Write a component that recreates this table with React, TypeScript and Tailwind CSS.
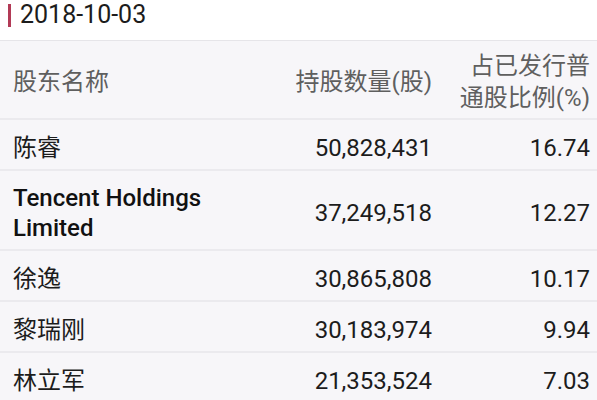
import * as React from "react";

const rows = [
  { name: "陈睿", shares: "50,828,431", pct: "16.74" },
  { name: "Tencent Holdings Limited", shares: "37,249,518", pct: "12.27", en: true },
  { name: "徐逸", shares: "30,865,808", pct: "10.17" },
  { name: "黎瑞刚", shares: "30,183,974", pct: "9.94" },
  { name: "林立军", shares: "21,353,524", pct: "7.03" },
];

const font = { fontFamily: 'Roboto, "Noto Sans CJK SC", sans-serif' };

const App = () => {
  return (
    <div className="w-[597px] h-[400px] overflow-hidden bg-[#f7f6f9] text-[24px]" style={font}>
      {/* date bar */}
      <div className="h-[41px] bg-white border-b border-[#e6e5e9] flex items-start pt-[4px]">
        <div className="ml-[8px] w-[3px] h-[23px] bg-[#b23a56]" />
        <span className="ml-[9px] -mt-[3px] leading-[28px] text-[25px] text-[#1c1c1c]">2018-10-03</span>
      </div>

      {/* header */}
      <div className="grid grid-cols-[1fr_152px_158px] h-[79px] pt-[5px] border-b-2 border-[#ebeaee] text-[#5f5f5f] items-center pr-[7px]">
        <div className="pl-[13px] leading-[32px]">股东名称</div>
        <div className="text-right leading-[32px]">持股数量(股)</div>
        <div className="text-right leading-[32px]">
          占已发行普
          <br />
          通股比例(%)
        </div>
      </div>

      {rows.map((r) => (
        <div
          key={r.name}
          className={`grid grid-cols-[1fr_152px_158px] items-center border-b-2 border-[#ebeaee] text-[#1c1c1c] pr-[7px] pt-[6px] ${
            r.en ? "h-[80px]" : "h-[51px]"
          }`}
        >
          {r.en ? (
            <div className="pl-[13px] leading-[30px] font-medium text-[#111]">
              Tencent Holdings
              <br />
              Limited
            </div>
          ) : (
            <div className="pl-[13px] leading-[30px]">{r.name}</div>
          )}
          <div className="text-right leading-[30px]">{r.shares}</div>
          <div className="text-right leading-[30px]">{r.pct}</div>
        </div>
      ))}
    </div>
  );
};

export default App;
